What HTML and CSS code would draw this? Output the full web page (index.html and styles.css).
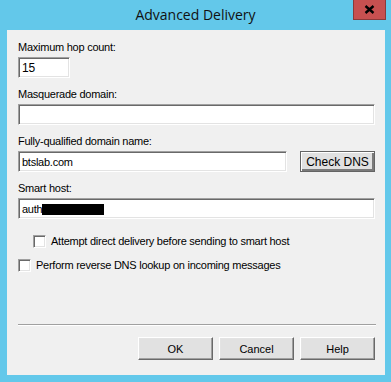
FILE: index.html
```html
<!DOCTYPE html>
<html lang="en">
<head>
    <meta charset="UTF-8">
    <title>Advanced Delivery</title>
    <link rel="stylesheet" href="styles.css">
</head>
<body>
    <div class="window">
        <div class="titlebar">
            <span></span>
            <div class="title">Advanced Delivery</div>
            <div class="close">
                <svg width="11" height="9" viewBox="0 0 11 9">
                    <path d="M1.5 1 L9.5 8 M9.5 1 L1.5 8" stroke="#000" stroke-width="2.4" fill="none"/>
                </svg>
            </div>
        </div>

        <div class="client">
            <div class="form-group">
                <label for="hops">Maximum hop count:</label>
                <div class="field short" id="hops">15</div>
            </div>
            <div class="form-group">
                <label for="masq">Masquerade domain:</label>
                <div class="field" id="masq"></div>
            </div>
            <div class="form-group">
                <label for="fqdn">Fully-qualified domain name:</label>
                <div class="row">
                    <div class="field grow" id="fqdn">btslab.com</div>
                    <button type="button" class="btn default">Check DNS</button>
                </div>
            </div>
            <div class="form-group">
                <label for="smart">Smart host:</label>
                <div class="field" id="smart">auth<span class="redact"></span></div>
            </div>

            <div class="check indent"><span class="box"></span>Attempt direct delivery before sending to smart host</div>
            <div class="check"><span class="box"></span>Perform reverse DNS lookup on incoming messages</div>

            <div class="separator"></div>
            <div class="actions">
                <button type="button" class="btn">OK</button>
                <button type="button" class="btn">Cancel</button>
                <button type="button" class="btn">Help</button>
            </div>
        </div>
    </div>
</body>
</html>
```

FILE: styles.css
```css
body {
    margin: 0;
    background: #63c8ea;
    font-family: "Liberation Sans", Arial, sans-serif;
    font-size: 11px;
    letter-spacing: -0.25px;
    color: #000;
}

.window {
    width: 391px;
    height: 382px;
}

.titlebar {
    height: 30px;
    display: grid;
    grid-template-columns: 1fr auto 1fr;
    align-items: start;
}

.title {
    font-family: "Open Sans", "Noto Sans", sans-serif;
    font-size: 14px;
    letter-spacing: 0;
    line-height: 30px;
    color: #111;
}

.close {
    justify-self: end;
    margin-right: 5px;
    width: 31px;
    height: 19px;
    background: #c75050;
    border: 1px solid #8a3a3a;
    border-top: none;
    display: flex;
    align-items: center;
    justify-content: center;
}

.client {
    margin: 0 6px 0 7px;
    height: 345px;
    background: #f0f0f0;
    padding: 11px 10px 0 11px;
    box-sizing: border-box;
}

.form-group {
    margin-bottom: 10px;
}

label {
    display: block;
    line-height: 13px;
    margin-bottom: 3px;
}

.field {
    height: 21px;
    box-sizing: border-box;
    background: #fff;
    border: 1px solid;
    border-color: #a0a0a0 #fff #fff #a0a0a0;
    box-shadow: inset 1px 1px #696969, inset -1px -1px #e3e3e3;
    padding: 3px 0 0 3px;
    line-height: 14px;
    white-space: nowrap;
}

.short {
    width: 52px;
    font-size: 12px;
}

.row {
    display: flex;
    gap: 13px;
}

.grow {
    flex: 1;
}

.redact {
    display: inline-block;
    width: 62px;
    height: 11px;
    background: #000;
    vertical-align: -2px;
}

.btn {
    width: 75px;
    height: 23px;
    padding: 0;
    background: #e1e1e1;
    font-family: "Liberation Sans", Arial, sans-serif;
    font-size: 11px;
    color: #000;
    border: 1px solid;
    border-color: #fff #696969 #696969 #fff;
    box-shadow: inset -1px -1px #a0a0a0, inset 1px 1px #e3e3e3;
}

.btn.default {
    height: 21px;
    font-size: 12px;
    border: 1px solid #646464;
    box-shadow: inset 1px 1px #fff, inset -2px -2px #7a7a7a;
}

.check {
    display: flex;
    align-items: center;
    line-height: 13px;
    margin-top: 11px;
}

.check.indent {
    margin-top: 16px;
    padding-left: 15px;
}

.box {
    width: 13px;
    height: 13px;
    box-sizing: border-box;
    background: #fff;
    border: 1px solid;
    border-color: #a0a0a0 #fff #fff #a0a0a0;
    box-shadow: inset 1px 1px #696969, inset -1px -1px #e3e3e3;
    margin-right: 5px;
}

.separator {
    margin-top: 52px;
    height: 0;
    border-top: 1px solid #a0a0a0;
    border-bottom: 1px solid #fff;
    margin-right: -1px;
}

.actions {
    display: flex;
    justify-content: flex-end;
    gap: 6px;
    margin-top: 11px;
}
```
